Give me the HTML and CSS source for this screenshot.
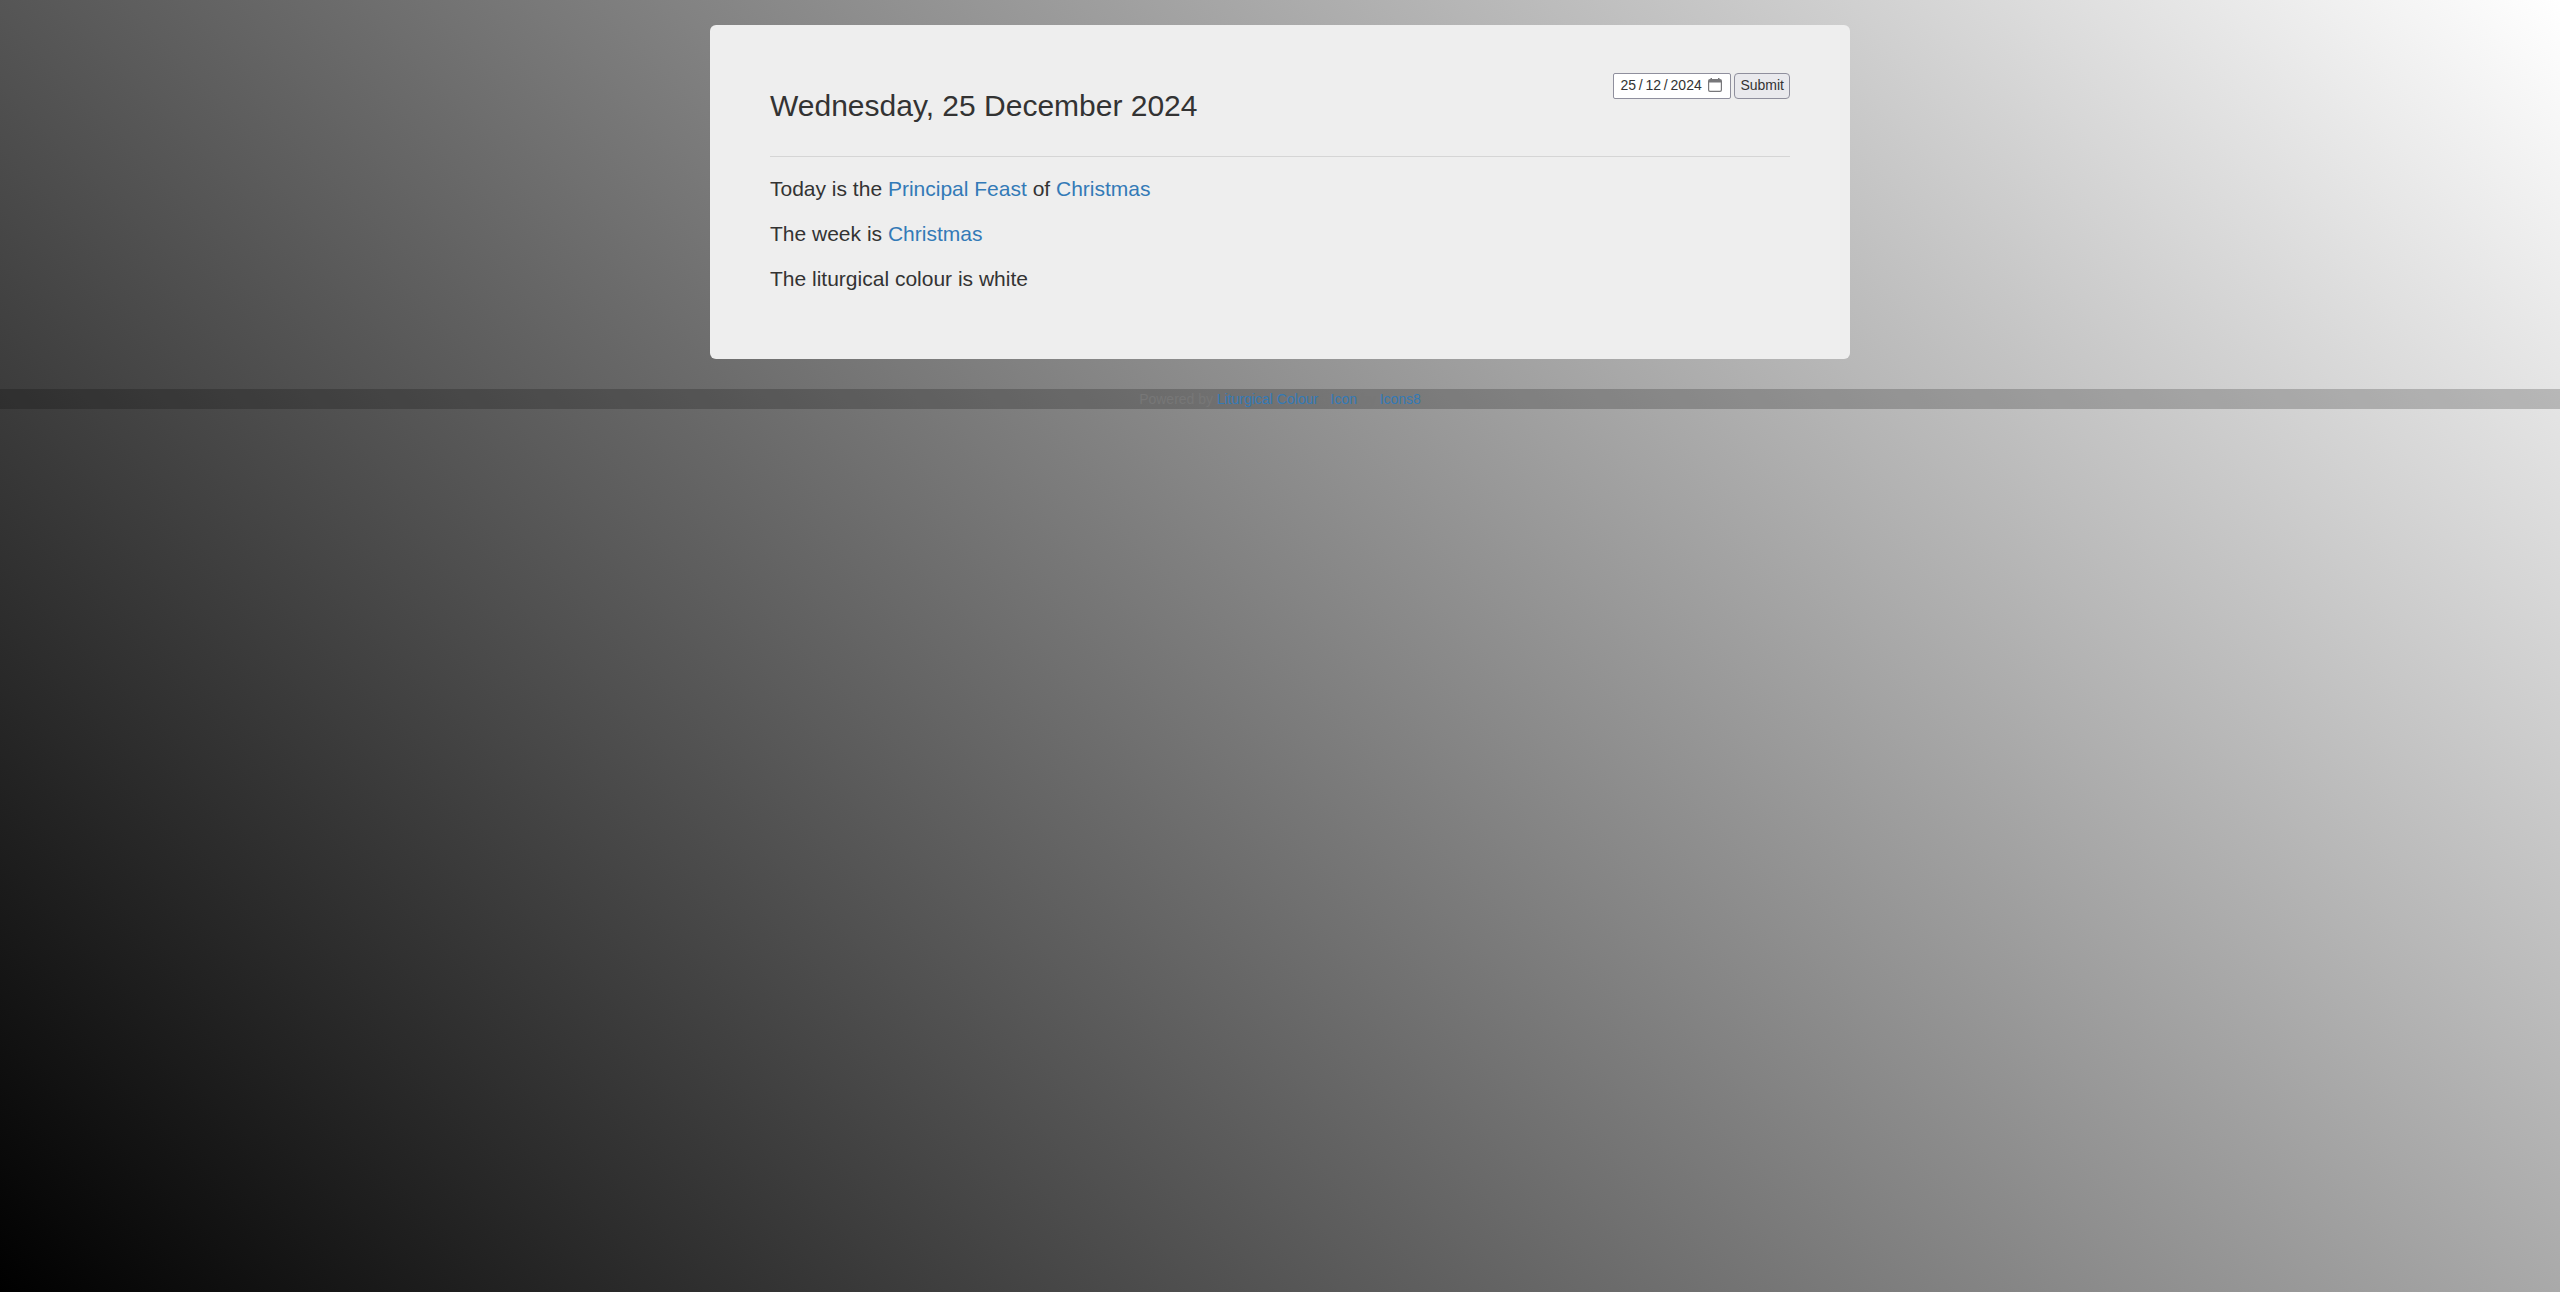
FILE: index.html
```html
<!DOCTYPE html>
<html lang="en-GB">
<head>
<meta charset="utf-8">
<meta name="viewport" content="width=device-width, initial-scale=1">
<title>Liturgical Colour</title>
<link rel="stylesheet" href="styles.css">
</head>
<body>
<main class="card">
  <header class="card-header">
    <h1 class="date-title">Wednesday, 25 December 2024</h1>
    <form class="date-form">
      <span class="date-field">
        <input class="date-input" type="text" aria-label="Date" value="25&thinsp;/&thinsp;12&thinsp;/&thinsp;2024">
        <svg class="calendar" viewBox="0 0 14 14" aria-hidden="true"><path fill-rule="evenodd" d="M2.500 0H4v1h6V0h1.500v1H12a2 2 0 0 1 2 2v9a2 2 0 0 1-2 2H2a2 2 0 0 1-2-2V3a2 2 0 0 1 2-2h.5zM1.200 4.500V12q0 .8.8.8h10q.8 0 .8-.8V4.500z" fill="#77777a"/></svg>
      </span>
      <button class="submit" type="submit">Submit</button>
    </form>
  </header>
  <p class="line">Today is the <a href="#feast">Principal Feast</a> of <a href="#christmas">Christmas</a></p>
  <p class="line">The week is <a href="#week">Christmas</a></p>
  <p class="line">The liturgical colour is white</p>
</main>
<footer class="footer">Powered by <a href="#about">Liturgical Colour</a> · <a href="#icon">Icon</a> by <a href="#icons8">Icons8</a></footer>
</body>
</html>
```
FILE: styles.css
```css
* { box-sizing: border-box; }

html {
  min-height: 100%;
  background: linear-gradient(45deg, #000, #fff);
}

body {
  margin: 0;
  padding-top: 25px;
  font: 14px/20px "Liberation Sans", Arial, sans-serif;
  color: #333;
}

a { color: #337ab7; text-decoration: none; }

.card {
  max-width: 1140px;
  margin: 0 auto 30px;
  padding: 48px 60px 50px;
  border-radius: 6px;
  background: #eee;
}

.card-header {
  display: flex;
  justify-content: space-between;
  align-items: flex-start;
  margin-bottom: 17px;
  padding-bottom: 33px;
  border-bottom: 1px solid #d5d5d5;
}

.date-title {
  margin: 16px 0 0;
  font-size: 30px;
  line-height: 34px;
  font-weight: 500;
}

.date-form { display: flex; gap: 3px; }

.date-field { position: relative; }

.date-input,
.submit {
  height: 26px;
  border: 1px solid #8f8f9d;
  color: #333;
  font: inherit;
}

.date-input {
  display: block;
  width: 118px;
  padding: 0 6px 2px;
  border-radius: 2px;
  background: #fff;
}

.calendar {
  position: absolute;
  top: 5px;
  right: 9px;
  width: 14px;
  height: 14px;
}

.submit {
  padding: 0 5px 2px;
  border-radius: 4px;
  background: #e9e9ed;
}

.line {
  margin: 0 0 15px;
  font-size: 21px;
  line-height: 30px;
}

.footer {
  background: rgba(0, 0, 0, 0.2);
  color: #777;
  text-align: center;
}
```
